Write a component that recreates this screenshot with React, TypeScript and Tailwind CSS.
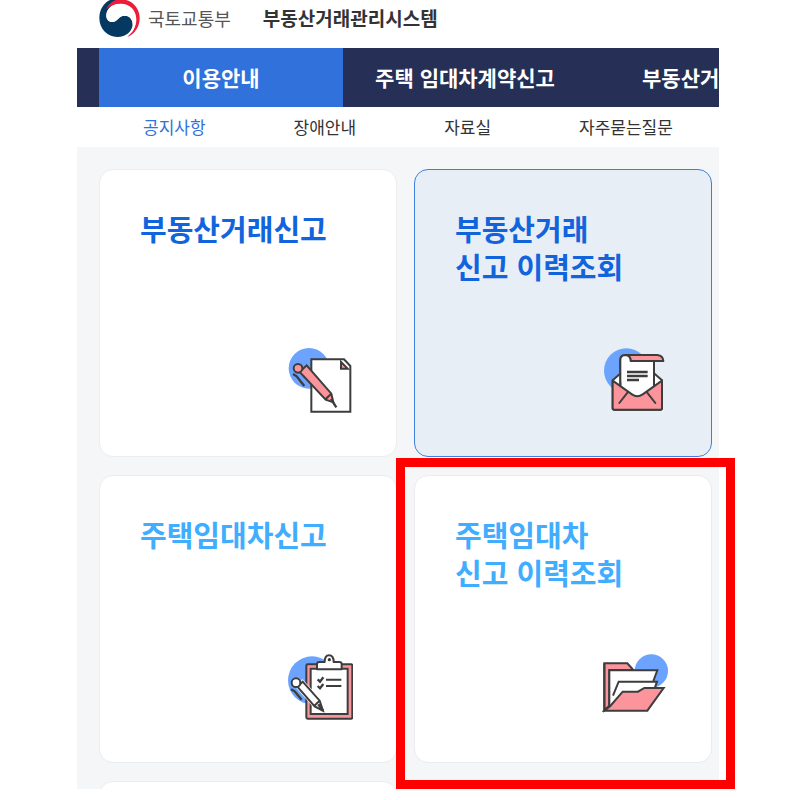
import type { ReactNode } from 'react';
import clsx from 'clsx';

const STROKE = '#3d3d3d';
const PINK = '#fb959b';
const BLUE = '#6ba3ff';

const mainMenu = ['이용안내', '주택 임대차계약신고'];
const subMenu = ['공지사항', '장애안내', '자료실', '자주묻는질문'];

function Logo() {
  return (
    <svg viewBox="27 0 123 114" className="h-[38px] w-[41px] shrink-0" aria-hidden="true">
      <path
        d="M60 0C40 9 28 30 28 54c0 32 24 57 54 57 26 0 46-18 46-40 0-14-10-24-24-24-20 0-20 19-37 19-11 0-18-8-18-19 0-18 16-35 37-38C86 3 95 0 104 0z"
        fill="#053962"
      />
      <path
        d="M48 28C58 8 72 0 88-2c36-2 61 24 61 56 0 26-14 48-37 57 16-14 27-31 27-53 0-26-18-47-46-47-18 0-34 6-45 17z"
        fill="#ee1c3a"
      />
      <path
        d="M49 47c0-20 17-35 41-35 26 0 47 20 47 47 0 18-5 31-13 40 5-8 6-18 4-28-2-14-10-24-24-24-20 0-20 19-37 19-11 0-18-8-18-19z"
        fill="#fff"
      />
    </svg>
  );
}

function PaperPenIcon() {
  return (
    <svg viewBox="51 48 198 207" className="h-[69px] w-[66px]" stroke={STROKE} strokeWidth="6" aria-hidden="true">
      <circle cx="117" cy="115" r="61" fill={BLUE} stroke="none" />
      <path d="M124 88h98l19 20v137H124z" fill="#fff" />
      <path d="M213 96v20h20z" fill={PINK} />
      <path d="M89 126l21-20 74 85 6 26-23-8z" fill={PINK} />
      <circle cx="84" cy="115" r="13" fill={PINK} />
      <path d="M166 208l17-16" fill="none" />
      <path d="M183 207l16 25" strokeWidth="7" />
      <path d="M69 132l11 7 23 29" fill="none" strokeWidth="7" />
    </svg>
  );
}

function EnvelopeIcon() {
  return (
    <svg
      viewBox="36 48 198 207"
      className="h-[69px] w-[66px]"
      stroke={STROKE}
      strokeWidth="6"
      strokeLinejoin="round"
      strokeLinecap="round"
      aria-hidden="true"
    >
      <circle cx="109" cy="122" r="67" fill={BLUE} stroke="none" />
      <path d="M68 151l24-21h100l24 21v84q0 4-5 4H73q-5 0-5-4z" fill="#fff" />
      <path d="M91 168V89q1-15 17-15h83v112l-49 13z" fill="#fff" stroke="none" />
      <path d="M68 152l58 41q16 11 32 0l58-41v82q0 5-5 5H73q-5 0-5-5z" fill={PINK} />
      <path d="M91 166V90q0-15 16-15 15 2 15 18h70v73" fill="none" />
      <path d="M107 75h95q17 2 18 18h-98q0-16-15-18z" fill={PINK} />
      <path d="M91 166V90q0-15 16-15 15 2 15 18" fill="#fff" />
      <path d="M113 187l-25 32M171 187l25 32" />
      <path d="M111 126h62M111 138h62M111 150h36" strokeWidth="7" strokeLinecap="butt" />
    </svg>
  );
}

function ClipboardIcon() {
  return (
    <svg viewBox="51 51 198 207" className="h-[69px] w-[66px]" stroke={STROKE} strokeWidth="6" aria-hidden="true">
      <circle cx="126" cy="136" r="72" fill={BLUE} stroke="none" />
      <rect x="109" y="88" width="138" height="163" rx="4" fill={PINK} />
      <path d="M122 101h111v136H122z" fill="#fff" />
      <path
        d="M141 103V88q0-7 7-7h16q0-20 13-20 14 0 14 20h17q7 0 7 7v15z"
        fill="#fff"
        strokeLinejoin="round"
      />
      <circle cx="178" cy="74" r="2" />
      <path d="M143 133l7 7 10-13M143 153l7 7 10-13" fill="none" strokeWidth="7" />
      <path d="M168 134h46M168 153h46" />
      <path d="M82 154l15-14 51 57 8 24-21-7z" fill="#fff" stroke="#fff" strokeWidth="11" />
      <path d="M82 155l16-15 51 57 10 30-25-13z" fill="#fff" />
      <circle cx="78" cy="143" r="13" fill="#fff" />
      <path d="M133 212l15-14" />
      <path d="M145 208l14 19" strokeWidth="8" />
      <path d="M63 163l11 6 21 25" fill="none" strokeWidth="7" />
    </svg>
  );
}

function FolderIcon() {
  return (
    <svg viewBox="36 51 198 207" className="h-[69px] w-[66px]" stroke={STROKE} strokeWidth="6" aria-hidden="true">
      <circle cx="184" cy="108" r="50" fill={BLUE} stroke="none" />
      <path d="M43 85h69l18 20h-72v107l-15 14z" fill={PINK} />
      <path d="M58 106h144l-12 33 11 2-6 19-90 30-40 23H58z" fill="#fff" stroke="none" />
      <path d="M190 138l12-32H58v107" fill="none" />
      <path d="M69 182l17-42h115l-7 20" fill="none" />
      <path d="M43 227l18-14 37-43h46l19-11h58l-49 68z" fill={PINK} />
      <path d="M43 85v142" />
    </svg>
  );
}

interface ServiceCardProps {
  lines: string[];
  icon: ReactNode;
  light?: boolean;
  active?: boolean;
}

function ServiceCard({ lines, icon, light, active }: ServiceCardProps) {
  return (
    <a
      href="#"
      className={clsx(
        'flex h-72 flex-col justify-between rounded-[14px] border pt-[39px] pr-[43px] pb-[41px] pl-10',
        active ? 'border-[#4080dc] bg-[#e7eef6]' : 'border-[#ebecee] bg-white',
      )}
    >
      <h2
        className={clsx(
          'text-[29px] leading-[38px] font-bold whitespace-nowrap',
          light ? 'text-[#41adff]' : 'text-[#1264dc]',
        )}
      >
        {lines.map((line) => (
          <span key={line} className="block">
            {line}
          </span>
        ))}
      </h2>
      <span className="self-end">{icon}</span>
    </a>
  );
}

export default function App() {
  return (
    <div
      lang="ko"
      className="bg-white pr-[81px] pl-[77px] font-['Noto_Sans_CJK_KR',sans-serif]"
    >
      <header>
        <div className="flex h-12 items-start pl-[22px]">
          <Logo />
          <span className="ml-2 pt-1 text-lg leading-7 text-[#555]">국토교통부</span>
          <h1 className="ml-8 pt-1 text-[19px] leading-7 font-bold text-[#333]">부동산거래관리시스템</h1>
        </div>

        <nav className="flex h-[59px] overflow-hidden bg-[#262f55] pl-[22px] text-[21px] font-bold whitespace-nowrap text-white">
          {mainMenu.map((label, i) => (
            <a
              key={label}
              href="#"
              className={clsx('flex w-[244px] shrink-0 items-center justify-center', i === 0 && 'bg-[#3071dc]')}
            >
              {label}
            </a>
          ))}
          <a href="#" className="flex items-center pl-[55px]">
            부동산거
          </a>
        </nav>

        <nav className="flex h-10 items-center pl-[22px] text-[17px] whitespace-nowrap">
          {subMenu.map((label, i) => (
            <a key={label} href="#" className={clsx('px-11', i === 0 ? 'text-[#3071dc]' : 'text-[#333]')}>
              {label}
            </a>
          ))}
        </nav>
      </header>

      <main className="bg-[#f5f6f8] pt-[22px] pr-[7px] pl-[22px]">
        <div className="grid grid-cols-2 gap-x-[17px] gap-y-[18px]">
          <ServiceCard lines={['부동산거래신고']} icon={<PaperPenIcon />} />
          <ServiceCard lines={['부동산거래', '신고 이력조회']} icon={<EnvelopeIcon />} active />
          <ServiceCard lines={['주택임대차신고']} icon={<ClipboardIcon />} light />
          <div className="relative">
            <ServiceCard lines={['주택임대차', '신고 이력조회']} icon={<FolderIcon />} light />
            {/* highlight frame */}
            <div className="pointer-events-none absolute -top-[17px] -right-[23px] -bottom-[26px] -left-[18px] border-[9px] border-[#ff0000]" />
          </div>
          <div className="h-2 overflow-hidden">
            <div className="h-10 rounded-[14px] border border-[#ebecee] bg-white" />
          </div>
        </div>
      </main>
    </div>
  );
}
